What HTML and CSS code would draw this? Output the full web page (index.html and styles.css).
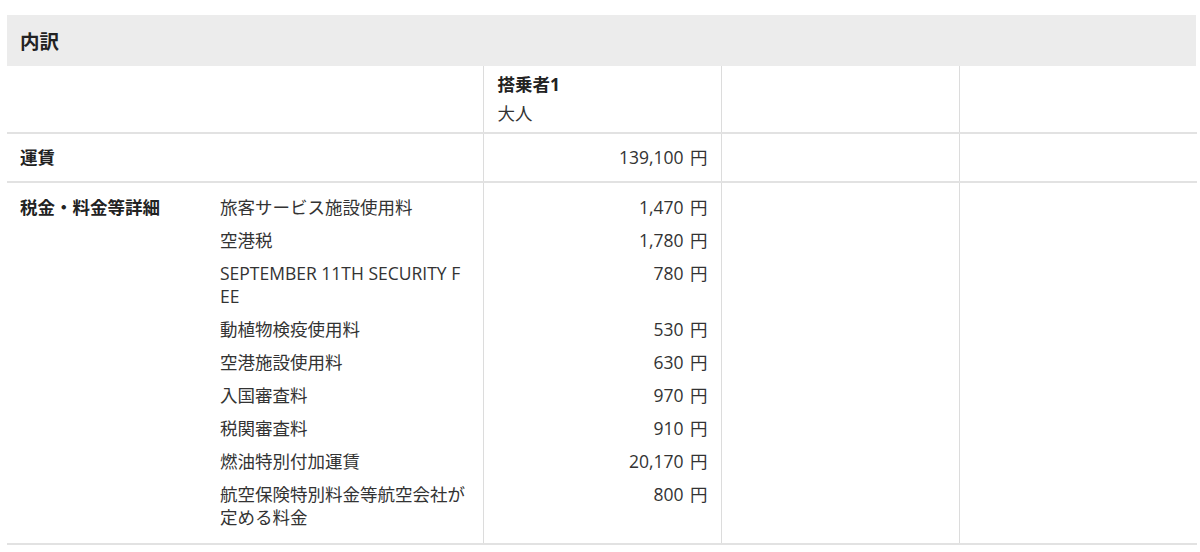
FILE: index.html
```html
<!DOCTYPE html>
<html lang="ja">
<head>
<meta charset="utf-8">
<title>内訳</title>
<link rel="stylesheet" href="styles.css">
</head>
<body>
<section class="breakdown">
  <h2 class="breakdown-title">内訳</h2>
  <table class="fare-table">
    <colgroup>
      <col class="c-label">
      <col class="c-sub">
      <col class="c-pax">
      <col class="c-pax">
      <col class="c-pax last">
    </colgroup>
    <tbody class="group head-group">
      <tr>
        <td class="label" colspan="2"></td>
        <td class="pax">
          <div class="pax-name">搭乗者1</div>
          <div class="pax-type">大人</div>
        </td>
        <td class="pax"></td>
        <td class="pax"></td>
      </tr>
    </tbody>
    <tbody class="group fare-group">
      <tr>
        <th class="label" colspan="2">運賃</th>
        <td class="pax amount">139,100 円</td>
        <td class="pax"></td>
        <td class="pax"></td>
      </tr>
    </tbody>
    <tbody class="group tax-group">
      <tr>
        <th class="label" rowspan="9">税金・料金等詳細</th>
        <td class="sub">旅客サービス施設使用料</td>
        <td class="pax amount">1,470 円</td>
        <td class="pax"></td>
        <td class="pax"></td>
      </tr>
      <tr>
        <td class="sub">空港税</td>
        <td class="pax amount">1,780 円</td>
        <td class="pax"></td>
        <td class="pax"></td>
      </tr>
      <tr>
        <td class="sub">SEPTEMBER 11TH SECURITY F<br>EE</td>
        <td class="pax amount">780 円</td>
        <td class="pax"></td>
        <td class="pax"></td>
      </tr>
      <tr>
        <td class="sub">動植物検疫使用料</td>
        <td class="pax amount">530 円</td>
        <td class="pax"></td>
        <td class="pax"></td>
      </tr>
      <tr>
        <td class="sub">空港施設使用料</td>
        <td class="pax amount">630 円</td>
        <td class="pax"></td>
        <td class="pax"></td>
      </tr>
      <tr>
        <td class="sub">入国審査料</td>
        <td class="pax amount">970 円</td>
        <td class="pax"></td>
        <td class="pax"></td>
      </tr>
      <tr>
        <td class="sub">税関審査料</td>
        <td class="pax amount">910 円</td>
        <td class="pax"></td>
        <td class="pax"></td>
      </tr>
      <tr>
        <td class="sub">燃油特別付加運賃</td>
        <td class="pax amount">20,170 円</td>
        <td class="pax"></td>
        <td class="pax"></td>
      </tr>
      <tr>
        <td class="sub">航空保険特別料金等航空会社が<br>定める料金</td>
        <td class="pax amount">800 円</td>
        <td class="pax"></td>
        <td class="pax"></td>
      </tr>
    </tbody>
  </table>
</section>
</body>
</html>
```

FILE: styles.css
```css
html, body {
  margin: 0;
  padding: 0;
  background: #ffffff;
}

body {
  font-family: "Open Sans", "Noto Sans CJK JP", sans-serif;
  font-size: 17.5px;
  color: #333333;
}

.breakdown {
  margin: 15px 4px 0 7px;
}

.breakdown-title {
  margin: 0;
  height: 51px;
  box-sizing: border-box;
  padding: 0 13px;
  display: flex;
  align-items: center;
  background: #ececec;
  font-size: 19.5px;
  font-weight: 700;
  color: #222222;
}

.fare-table {
  width: 100%;
  border-collapse: collapse;
  table-layout: fixed;
}

.c-label { width: 213px; }
.c-sub { width: 263px; }
.c-pax { width: 238px; }

.fare-table td,
.fare-table th {
  padding: 0;
  vertical-align: top;
  text-align: left;
  line-height: 23px;
  font-weight: 400;
}

.group {
  border-bottom: 2px solid #e2e2e2;
}

.pax {
  border-left: 1px solid #dcdcdc;
  padding-left: 14px !important;
  padding-right: 13px !important;
}

.label {
  padding-left: 13px !important;
  font-weight: 700 !important;
  color: #222222;
}

.sub {
  padding-left: 0;
}

.amount {
  text-align: right !important;
  word-spacing: 2px;
}

/* header row */
.head-group td {
  padding-top: 7px;
  padding-bottom: 7px;
}

.pax-name {
  font-weight: 700;
  color: #222222;
  margin-bottom: 6px;
}

/* fare row */
.fare-group td,
.fare-group th {
  padding-top: 12px;
  padding-bottom: 12px;
}

/* tax rows */
.tax-group td {
  padding-top: 5px;
  padding-bottom: 5px;
}

.tax-group tr:first-child td,
.tax-group tr:first-child th {
  padding-top: 13px;
}

.tax-group th.label {
  padding-top: 13px;
}

.tax-group tr:last-child td {
  padding-bottom: 14px;
}
```
